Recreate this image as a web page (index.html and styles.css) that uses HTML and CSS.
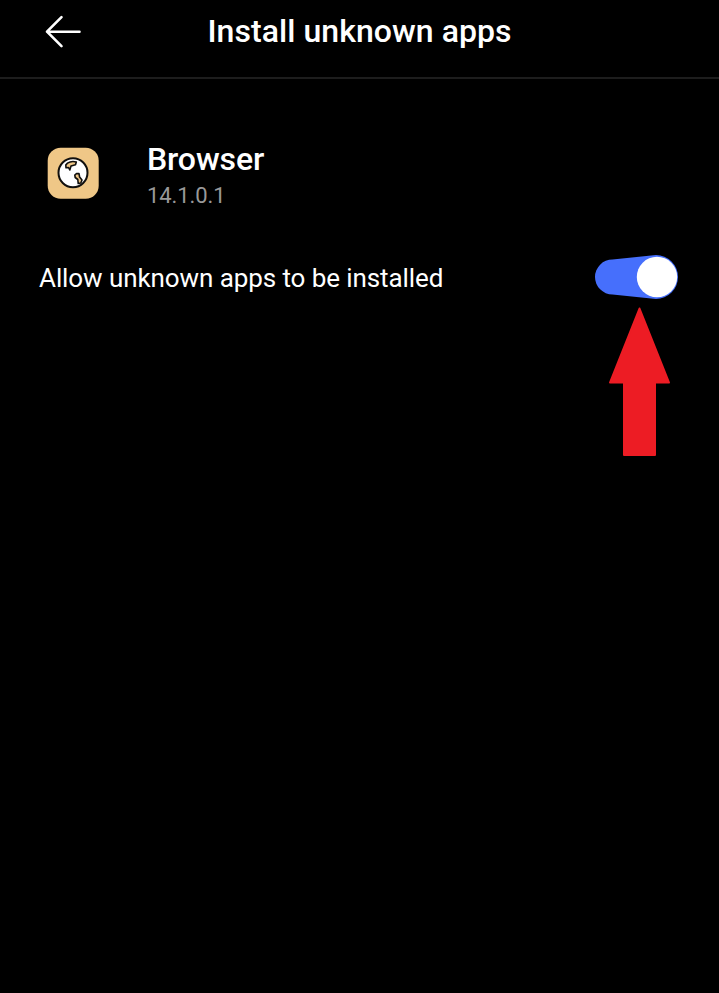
FILE: index.html
```html
<!DOCTYPE html>
<html lang="en">
<head>
<meta charset="utf-8">
<title>Install unknown apps</title>
<link rel="stylesheet" href="styles.css">
</head>
<body>
<header class="bar">
  <svg class="back" viewBox="0 0 40 36" aria-label="Back"><path d="M34.500 17.700H2M16.500 3.200L2 17.700L16.500 32.200"/></svg>
  <h1 class="title">Install unknown apps</h1>
</header>
<main>
  <section class="app">
    <svg class="app-icon" viewBox="0 0 52 52">
      <rect class="tile" x="0.700" y="0.700" width="51" height="51" rx="13"/>
      <circle class="globe" cx="26" cy="25.800" r="14.500"/>
      <path class="land" d="M18.800 18C20.500 15 25 13.800 29.300 15L28.500 17.800L24 19L22.800 23L21.500 20.500L19 20.800Z"/>
      <path class="land" d="M27.800 28L29.500 26.600H32L32.600 30L35 33L33.800 36L31.200 36.500L30.800 32.500L28.200 30.500Z"/>
    </svg>
    <div class="app-text">
      <h2 class="app-name">Browser</h2>
      <p class="version">14.1.0.1</p>
    </div>
  </section>
  <section class="setting">
    <span class="label">Allow unknown apps to be installed</span>
    <div class="control">
      <svg class="switch" viewBox="0 0 86 46">
        <path class="track" d="M18.500 5.500L62 1A22 22 0 1 1 62 45L18.500 40.500A17.500 17.500 0 0 1 18.500 5.500Z"/>
        <circle class="knob" cx="63" cy="23" r="20.200"/>
      </svg>
      <svg class="pointer" viewBox="0 0 62 150"><path d="M30.500 2.500L60 76.500H46V149H15V76.500H1Z"/></svg>
    </div>
  </section>
</main>
</body>
</html>
```
FILE: styles.css
```css
* {
  box-sizing: border-box;
}

body {
  margin: 0;
  min-height: 100vh;
  background: #000;
  color: #fff;
  font-family: Roboto, "Liberation Sans", sans-serif;
}

.bar {
  display: grid;
  grid-template-columns: 85px 1fr 85px;
  height: 79px;
  padding-top: 11px;
  border-bottom: 2px solid #1d1d1d;
}

.back {
  width: 40px;
  height: 36px;
  margin: 3px 0 0 45px;
  fill: none;
  stroke: #fff;
  stroke-width: 2.6;
  stroke-linecap: round;
  stroke-linejoin: round;
}

.title {
  margin: 0;
  font-size: 32px;
  font-weight: 500;
  line-height: 40px;
  letter-spacing: 0.06px;
  text-align: center;
  white-space: nowrap;
}

.app {
  display: flex;
  gap: 48px;
  padding: 60px 0 0 47px;
}

.app-icon {
  width: 52px;
  height: 52px;
  margin-top: 8px;
}

.tile {
  fill: #efc787;
}

.globe {
  fill: #fff;
  stroke: #11100e;
  stroke-width: 2;
}

.land {
  fill: #efc787;
  stroke: #11100e;
  stroke-width: 1.6;
  stroke-linejoin: round;
}

.app-name {
  margin: 0;
  font-size: 32px;
  font-weight: 500;
  line-height: 40px;
  letter-spacing: -0.12px;
}

.version {
  margin: 3px 0 0;
  color: #999;
  font-size: 22px;
  line-height: 28px;
  letter-spacing: -0.1px;
}

.setting {
  display: flex;
  justify-content: space-between;
  align-items: flex-start;
  padding: 44px 39px 0 39px;
}

.label {
  margin-top: 8px;
  font-size: 26px;
  line-height: 32px;
  letter-spacing: -0.085px;
}

.control {
  display: flex;
  flex-direction: column;
  align-items: center;
}

.switch {
  width: 86px;
  height: 46px;
}

.track {
  fill: #466ffc;
}

.knob {
  fill: #fff;
}

.pointer {
  width: 62px;
  height: 150px;
  margin: 6px 0 0 5px;
  fill: #ed1c24;
  stroke: #ed1c24;
  stroke-width: 2;
  stroke-linejoin: round;
}
```
